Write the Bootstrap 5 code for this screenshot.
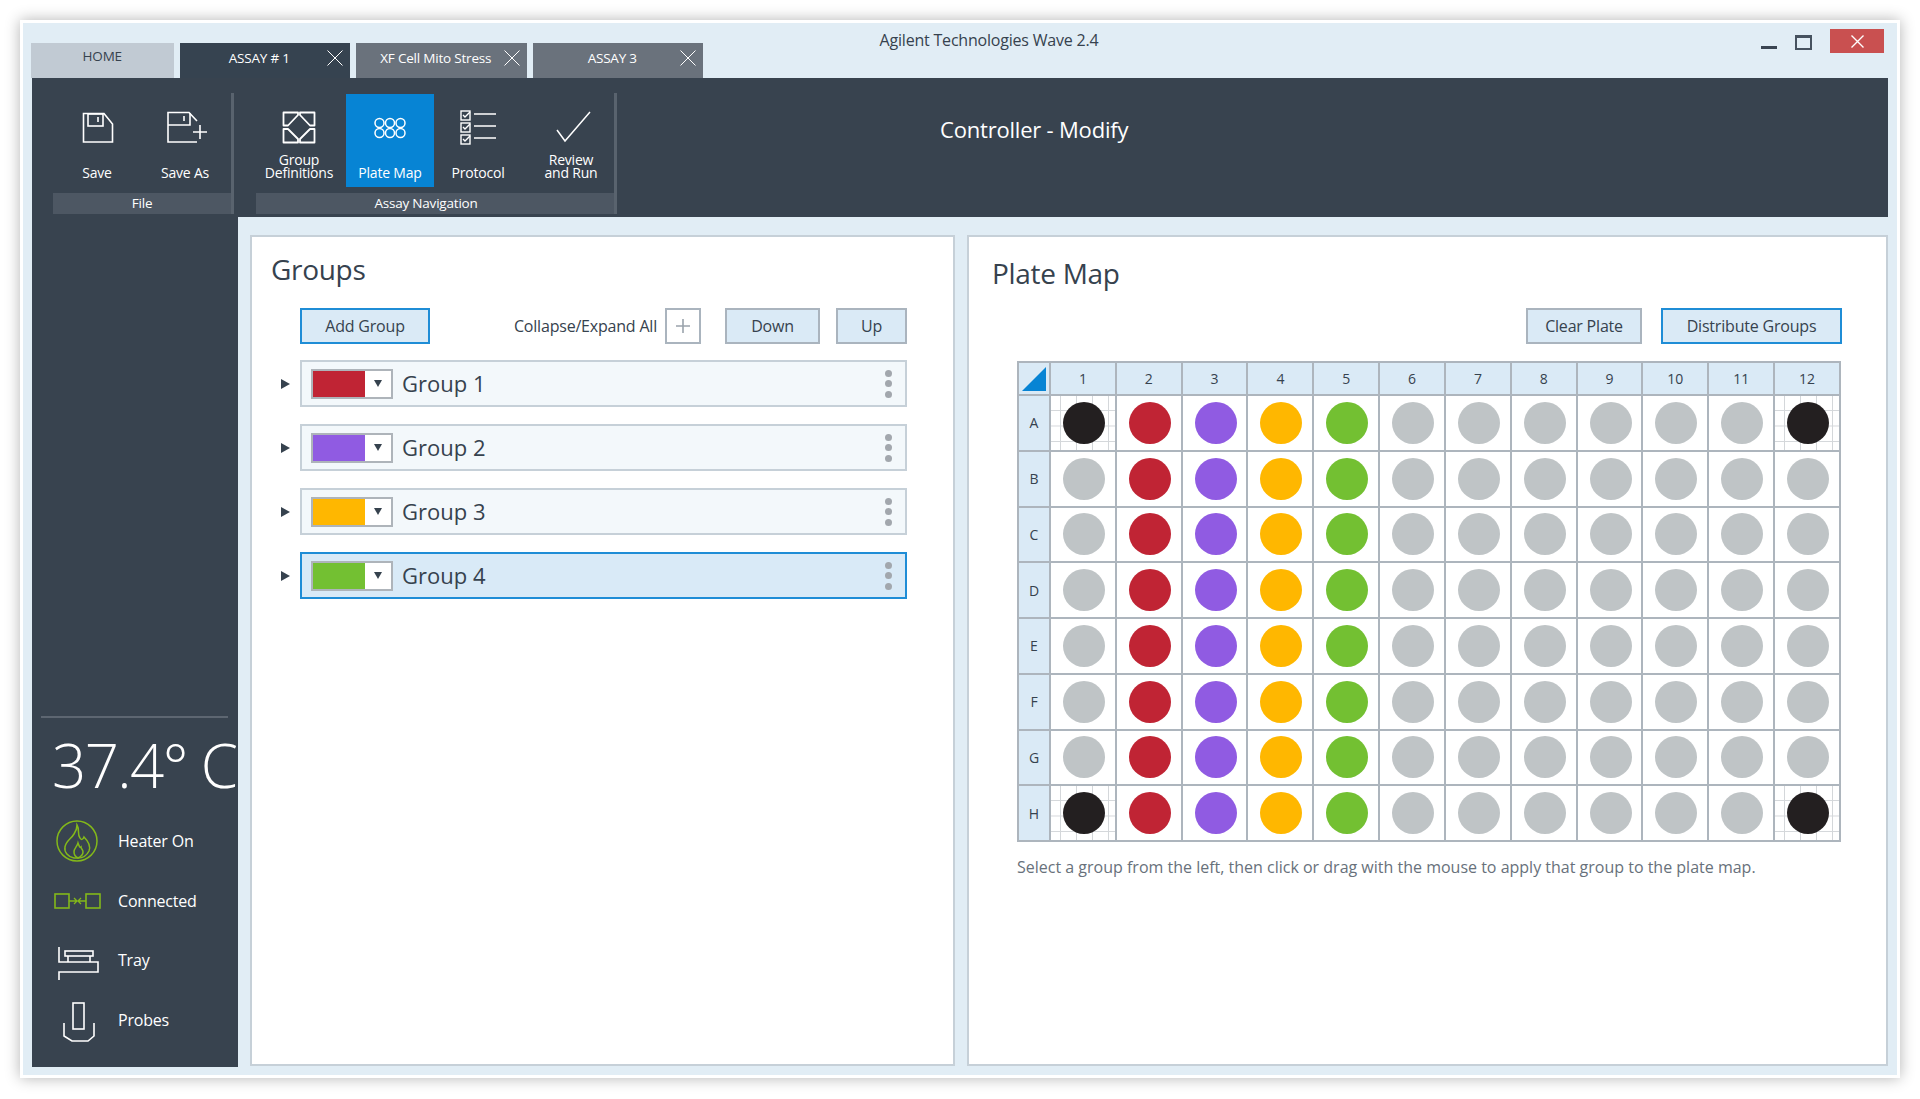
<!DOCTYPE html>
<html lang="en">
<head>
<meta charset="utf-8">
<title>Agilent Technologies Wave 2.4</title>
<link href="https://cdn.jsdelivr.net/npm/bootstrap@5.3.0/dist/css/bootstrap.min.css" rel="stylesheet">
<style>
html,body{height:100%;background:#fff;overflow:hidden}
body{font-family:"Open Sans","Liberation Sans",sans-serif;color:#36424e;font-size:16px;letter-spacing:-.2px}
.wv-win{position:relative;margin:20px 0 0 20px;width:1880px;height:1058px;border:3px solid #fff;background:#e1edf5;box-shadow:0 0 14px rgba(0,0,0,.3);padding:0 9px 8px}
.wv-top{height:55px;margin-left:-1px}
.wv-tabs{width:672px;height:35px;margin-top:20px;gap:6px}
.wv-tab{position:relative;width:171px;height:35px;font-size:13.5px;color:#fff;background:#6a727c;padding-right:11px;padding-top:5px}
.wv-tab.wv-home{width:143px;background:#c1cad3;color:#36424e;padding:0;padding-top:3px}
.wv-tab.wv-cur{background:#364350}
.wv-x{position:absolute;top:7px;right:7px}
.wv-name{width:572px;padding-top:5px;text-align:center;font-size:16px;color:#36424e}
.wv-ctl{padding-top:6px;padding-right:4px}
.wv-min{width:16px;height:3px;background:#3a4552;margin:17px 18px 0 0}
.wv-max{width:17px;height:15px;border:2px solid #46525f;border-top-width:3px;margin:6px 18px 0 0}
.wv-close{width:54px;height:24px;background:#c95050}
.wv-ribbon{height:139px;background:#38434f;padding:15px 0 3px 21px;flex:none}
.wv-grp{border-right:3px solid #59636e;flex:none}
.wv-g1{width:181px}
.wv-g2{width:361px;margin-left:22px}
.wv-items{height:93px;margin-top:1px}
.wv-item{width:88px;height:93px;flex:none;color:#fff;font-size:14px;line-height:13px;padding:15px 0 8px;text-align:center}
.wv-item.wv-on{background:#0784d4}
.wv-i1{width:86px;margin-right:4px}
.wv-i4{width:98px;margin-right:-6px}
.wv-bar{height:21px;margin-top:6px;background:#4d5763;color:#fff;font-size:13.5px;line-height:21px;text-align:center;margin-right:0}
.wv-g2 .wv-bar{padding-right:18px}
.wv-rtitle{margin-left:323px;padding-top:20px;font-size:22px;color:#fff}
.wv-main{height:850px}
.wv-side{width:206px;flex:none;background:#38434f;padding:0 10px 17px 9px;color:#fff}
.wv-rule{height:2px;background:#5d6671;margin-bottom:8px}
.wv-temp{height:85px;font-size:60px;font-weight:300;line-height:78px;padding-left:11px;white-space:nowrap;letter-spacing:-1.6px}
.wv-srow{height:59.7px;font-size:16px}
.wv-srow svg{width:56px;height:50px;margin:0 12px 0 9px;flex:none}
.wv-work{padding:18px 0 1px 12px;gap:12px;min-width:0}
.wv-panel{border:2px solid #c6d0d8;border-radius:0;background:#fff;height:831px;flex:none;color:#36424e}
.wv-pg{width:705px;padding:0 0 0 48px}
.wv-pp{width:921px;padding:0 0 0 48px}
.wv-h{font-size:28px;font-weight:400;line-height:38px;margin:0 0 0 -29px;padding-top:13px;height:71px;letter-spacing:-.3px}
.wv-pp .wv-h{margin-left:-25px;padding-top:17px}
.wv-bars{width:607px;height:35px}
.wv-bt{border-radius:0;height:36px;padding:0;font-size:16px;line-height:32px;color:#36424e;background:#daeaf6;border:2px solid #aab4be;letter-spacing:-.2px}
.wv-bt:hover{background:#daeaf6;color:#36424e;border-color:#aab4be}
.wv-bt.wv-act,.wv-bt.wv-act:hover{border-color:#1f8dd6}
.wv-plus{width:36px;background:#fff}
.wv-list{margin-top:17px;gap:17px;margin-left:-19px}
.wv-rowi{gap:10px}
.wv-tri{width:0;height:0;border-left:9px solid #36424e;border-top:5.5px solid transparent;border-bottom:5.5px solid transparent;flex:none}
.wv-gp{width:607px;height:47px;border:2px solid #c6d0d8;background:#f3f8fb;padding:0 9px;font-size:22px;letter-spacing:0;color:#36424e}
.wv-gp.wv-sel{background:#d9eaf7;border-color:#1f8dd6}
.wv-sw{width:82px;height:30px;border:2px solid #aeb4ba;background:#fff;flex:none;margin-right:9px}
.wv-col{width:52px;height:100%;flex:none}
.wv-dn{width:0;height:0;border-top:7px solid #36424e;border-left:4px solid transparent;border-right:4px solid transparent;margin:auto}
.wv-dots{gap:3.5px}
.wv-dots i{display:block;width:7px;height:7px;border-radius:50%;background:#a2a7ad}
.wv-c1{background:#c02434}.wv-c2{background:#905be2}.wv-c3{background:#ffb700}.wv-c4{background:#73c032}.wv-c0{background:#bfc4c6}.wv-c5{background:#231f20}
.wv-pbars{width:825px;height:36px;margin-left:0;gap:19px;padding-top:0}
.wv-pbars{margin-top:0}
table.wv-plate{width:824px;table-layout:fixed;margin:17px 0 0;--bs-table-border-color:#adb5bd;border-color:#adb5bd;border-width:2px}
table.wv-plate>*>tr>*{padding:0;border-width:2px;border-color:#adb5bd;text-align:center;vertical-align:middle;font-size:14px;font-weight:400;color:#36424e;letter-spacing:0}
table.wv-plate th{background:#daeaf6}
.wv-plate .wv-hr{height:33px}
.wv-plate .wv-wr{height:55.75px}
.wv-plate .wv-first{width:32px}
.wv-corner{display:block;margin:auto}
.wv-w{display:block;width:42px;height:42px;border-radius:50%;margin:0 auto;position:relative;left:1px}
table.wv-plate td.wv-mk{background-image:linear-gradient(#d4d7da 1px,transparent 1px),linear-gradient(90deg,#d4d7da 1px,transparent 1px);background-size:16px 15.5px;background-position:0 14px,9px 0}
.wv-note{margin-top:13px;font-size:16px;color:#68717b;letter-spacing:0}
</style>
</head>
<body>
<div class="wv-win d-flex flex-column">
  <div class="wv-top d-flex flex-none">
    <div class="wv-tabs d-flex">
      <div class="wv-tab wv-home text-center">HOME</div>
      <div class="wv-tab wv-cur text-center">ASSAY # 1<svg class="wv-x" width="16" height="16" viewBox="0 0 16 16"><path d="M.5.5l15 15M15.5.5l-15 15" stroke="#fff" fill="none"/></svg></div>
      <div class="wv-tab text-center">XF Cell Mito Stress<svg class="wv-x" width="16" height="16" viewBox="0 0 16 16"><path d="M.5.5l15 15M15.5.5l-15 15" stroke="#fff" fill="none"/></svg></div>
      <div class="wv-tab text-center">ASSAY 3<svg class="wv-x" width="16" height="16" viewBox="0 0 16 16"><path d="M.5.5l15 15M15.5.5l-15 15" stroke="#fff" fill="none"/></svg></div>
    </div>
    <div class="wv-name">Agilent Technologies Wave 2.4</div>
    <div class="wv-ctl ms-auto d-flex align-items-start">
      <div class="wv-min"></div>
      <div class="wv-max"></div>
      <div class="wv-close d-flex align-items-center justify-content-center"><svg width="13" height="13" viewBox="0 0 13 13"><path d="M.5.5l12 12M12.5.5l-12 12" stroke="#fff" stroke-width="1.4" fill="none"/></svg></div>
    </div>
  </div>

  <div class="wv-ribbon d-flex">
    <div class="wv-grp wv-g1">
      <div class="wv-items d-flex">
        <div class="wv-item d-flex flex-column align-items-center justify-content-between">
          <svg width="40" height="36" viewBox="0 0 40 36" fill="none" stroke="#fff" stroke-width="1.6"><path d="M6.5 4.5H27L35.5 15V33H6.5Z"/><rect x="11" y="5" width="15" height="12"/><path d="M21 8v5"/></svg>
          <span>Save</span>
        </div>
        <div class="wv-item d-flex flex-column align-items-center justify-content-between">
          <svg width="48" height="36" viewBox="0 0 48 36" fill="none" stroke="#fff" stroke-width="1.6"><path d="M36 12L28 3.5H7V33H36"/><path d="M7 16H29V4M23 7v5"/><path d="M39 16V30M32 23H46"/></svg>
          <span>Save As</span>
        </div>
      </div>
      <div class="wv-bar">File</div>
    </div>
    <div class="wv-grp wv-g2">
      <div class="wv-items d-flex">
        <div class="wv-item wv-i1 d-flex flex-column align-items-center justify-content-between">
          <svg width="40" height="36" viewBox="0 0 40 36" fill="none" stroke="#fff" stroke-width="1.8" stroke-linejoin="round"><path d="M4.5 3.5H19V6L9 16.5H4.5Z"/><path d="M35.5 3.5H21V6L31 16.5H35.5Z"/><path d="M4.5 33.5H19V30L9 20H4.5Z"/><path d="M35.5 33.5H21V30L31 20H35.5Z"/></svg>
          <span>Group<br>Definitions</span>
        </div>
        <div class="wv-item wv-on d-flex flex-column align-items-center justify-content-between">
          <svg width="40" height="36" viewBox="0 0 40 36" fill="none" stroke="#fff" stroke-width="1.5"><circle cx="9.500" cy="14" r="4.500"/><circle cx="20" cy="14" r="4.500"/><circle cx="30.500" cy="14" r="4.500"/><circle cx="9.500" cy="24" r="4.500"/><circle cx="20" cy="24" r="4.500"/><circle cx="30.500" cy="24" r="4.500"/></svg>
          <span>Plate Map</span>
        </div>
        <div class="wv-item d-flex flex-column align-items-center justify-content-between">
          <svg width="40" height="36" viewBox="0 0 40 36" fill="none" stroke="#fff" stroke-width="1.4"><rect x="3" y="2" width="9" height="9"/><rect x="3" y="14" width="9" height="9"/><rect x="3" y="26" width="9" height="9"/><path d="M5 6l2 2 5-5M5 18l2 2 5-5M5 30l2 2 5-5M16 5H38M16 17H38M16 29H38"/></svg>
          <span>Protocol</span>
        </div>
        <div class="wv-item wv-i4 d-flex flex-column align-items-center justify-content-between">
          <svg width="40" height="36" viewBox="0 0 40 36" fill="none" stroke="#fff" stroke-width="1.5"><path d="M6 21L14 32L39 3"/></svg>
          <span>Review<br>and Run</span>
        </div>
      </div>
      <div class="wv-bar">Assay Navigation</div>
    </div>
    <div class="wv-rtitle">Controller - Modify</div>
  </div>

  <div class="wv-main d-flex">
    <aside class="wv-side d-flex flex-column justify-content-end">
      <div class="wv-rule"></div>
      <div class="wv-temp">37.4° C</div>
      <div class="wv-srow d-flex align-items-center">
        <svg viewBox="0 0 56 50" fill="none" stroke="#83b81a" stroke-width="1.5"><circle cx="27" cy="25" r="20"/><path d="M27 9C30 14 27 18 30 22C31 24 33 24 34 21C38 25 41 30 39 35C37 39 33 42 28 42H24C18 41 14 36 15 31C16 25 21 23 24 18C26 15 27 12 27 9Z"/><path d="M28 27C27 31 24 32 24 36C24 39 26 41 28 42C30 41 33 39 33 36C33 33 31 33 31 31C30 32 29 30 28 27Z"/></svg>
        <span>Heater On</span>
      </div>
      <div class="wv-srow d-flex align-items-center">
        <svg viewBox="0 0 56 50" fill="none" stroke="#83b81a" stroke-width="1.6"><rect x="5" y="18" width="14" height="14"/><rect x="36" y="18" width="14" height="14"/><path d="M19 25H27M24 22l3 3-3 3M36 25H28M31 22l-3 3 3 3" stroke-width="1.3"/></svg>
        <span>Connected</span>
      </div>
      <div class="wv-srow d-flex align-items-center">
        <svg viewBox="0 0 56 50" fill="none" stroke="#fff" stroke-width="1.6"><path d="M9 12V27H48V37H9V45"/><rect x="15" y="16" width="28" height="5"/><path d="M18 21V27M40 21V27"/></svg>
        <span>Tray</span>
      </div>
      <div class="wv-srow d-flex align-items-center">
        <svg viewBox="0 0 56 50" fill="none" stroke="#fff" stroke-width="1.6"><rect x="23" y="8" width="11" height="26"/><path d="M14 28V41L22 46H38L44 41V28"/></svg>
        <span>Probes</span>
      </div>
    </aside>

    <div class="wv-work d-flex">
      <section class="wv-panel wv-pg">
        <h2 class="wv-h">Groups</h2>
        <div class="wv-bars d-flex align-items-center">
          <button class="btn wv-bt wv-act" style="width:130px">Add Group</button>
          <span class="ms-auto me-2">Collapse/Expand All</span>
          <button class="btn wv-bt wv-plus d-flex align-items-center justify-content-center" aria-label="Expand"><svg width="14" height="14" viewBox="0 0 14 14"><path d="M7 0V14M0 7H14" stroke="#9aa3ac" stroke-width="1.6"/></svg></button>
          <button class="btn wv-bt ms-4" style="width:95px">Down</button>
          <button class="btn wv-bt ms-3" style="width:71px">Up</button>
        </div>
        <div class="wv-list d-flex flex-column">
          <div class="wv-rowi d-flex align-items-center"><i class="wv-tri"></i><div class="wv-gp d-flex align-items-center"><div class="wv-sw d-flex"><div class="wv-col wv-c1"></div><div class="wv-dn"></div></div>Group 1<div class="wv-dots d-flex flex-column ms-auto me-1"><i></i><i></i><i></i></div></div></div>
          <div class="wv-rowi d-flex align-items-center"><i class="wv-tri"></i><div class="wv-gp d-flex align-items-center"><div class="wv-sw d-flex"><div class="wv-col wv-c2"></div><div class="wv-dn"></div></div>Group 2<div class="wv-dots d-flex flex-column ms-auto me-1"><i></i><i></i><i></i></div></div></div>
          <div class="wv-rowi d-flex align-items-center"><i class="wv-tri"></i><div class="wv-gp d-flex align-items-center"><div class="wv-sw d-flex"><div class="wv-col wv-c3"></div><div class="wv-dn"></div></div>Group 3<div class="wv-dots d-flex flex-column ms-auto me-1"><i></i><i></i><i></i></div></div></div>
          <div class="wv-rowi d-flex align-items-center"><i class="wv-tri"></i><div class="wv-gp wv-sel d-flex align-items-center"><div class="wv-sw d-flex"><div class="wv-col wv-c4"></div><div class="wv-dn"></div></div>Group 4<div class="wv-dots d-flex flex-column ms-auto me-1"><i></i><i></i><i></i></div></div></div>
        </div>
      </section>

      <section class="wv-panel wv-pp">
        <h2 class="wv-h">Plate Map</h2>
        <div class="wv-pbars d-flex justify-content-end">
          <button class="btn wv-bt" style="width:116px">Clear Plate</button>
          <button class="btn wv-bt wv-act" style="width:181px">Distribute Groups</button>
        </div>
        <table class="table table-bordered wv-plate">
          <thead><tr class="wv-hr"><th class="wv-first"><svg class="wv-corner" width="24" height="24" viewBox="0 0 24 24"><path d="M24 0V24H0Z" fill="#0784d4"/></svg></th><th>1</th><th>2</th><th>3</th><th>4</th><th>5</th><th>6</th><th>7</th><th>8</th><th>9</th><th>10</th><th>11</th><th>12</th></tr></thead>
          <tbody id="wv-body">
            <tr class="wv-wr"><th>A</th><td class="wv-mk"><i class="wv-w wv-c5"></i></td><td><i class="wv-w wv-c1"></i></td><td><i class="wv-w wv-c2"></i></td><td><i class="wv-w wv-c3"></i></td><td><i class="wv-w wv-c4"></i></td><td><i class="wv-w wv-c0"></i></td><td><i class="wv-w wv-c0"></i></td><td><i class="wv-w wv-c0"></i></td><td><i class="wv-w wv-c0"></i></td><td><i class="wv-w wv-c0"></i></td><td><i class="wv-w wv-c0"></i></td><td class="wv-mk"><i class="wv-w wv-c5"></i></td></tr>
            <tr class="wv-wr"><th>B</th><td><i class="wv-w wv-c0"></i></td><td><i class="wv-w wv-c1"></i></td><td><i class="wv-w wv-c2"></i></td><td><i class="wv-w wv-c3"></i></td><td><i class="wv-w wv-c4"></i></td><td><i class="wv-w wv-c0"></i></td><td><i class="wv-w wv-c0"></i></td><td><i class="wv-w wv-c0"></i></td><td><i class="wv-w wv-c0"></i></td><td><i class="wv-w wv-c0"></i></td><td><i class="wv-w wv-c0"></i></td><td><i class="wv-w wv-c0"></i></td></tr>
            <tr class="wv-wr"><th>C</th><td><i class="wv-w wv-c0"></i></td><td><i class="wv-w wv-c1"></i></td><td><i class="wv-w wv-c2"></i></td><td><i class="wv-w wv-c3"></i></td><td><i class="wv-w wv-c4"></i></td><td><i class="wv-w wv-c0"></i></td><td><i class="wv-w wv-c0"></i></td><td><i class="wv-w wv-c0"></i></td><td><i class="wv-w wv-c0"></i></td><td><i class="wv-w wv-c0"></i></td><td><i class="wv-w wv-c0"></i></td><td><i class="wv-w wv-c0"></i></td></tr>
            <tr class="wv-wr"><th>D</th><td><i class="wv-w wv-c0"></i></td><td><i class="wv-w wv-c1"></i></td><td><i class="wv-w wv-c2"></i></td><td><i class="wv-w wv-c3"></i></td><td><i class="wv-w wv-c4"></i></td><td><i class="wv-w wv-c0"></i></td><td><i class="wv-w wv-c0"></i></td><td><i class="wv-w wv-c0"></i></td><td><i class="wv-w wv-c0"></i></td><td><i class="wv-w wv-c0"></i></td><td><i class="wv-w wv-c0"></i></td><td><i class="wv-w wv-c0"></i></td></tr>
            <tr class="wv-wr"><th>E</th><td><i class="wv-w wv-c0"></i></td><td><i class="wv-w wv-c1"></i></td><td><i class="wv-w wv-c2"></i></td><td><i class="wv-w wv-c3"></i></td><td><i class="wv-w wv-c4"></i></td><td><i class="wv-w wv-c0"></i></td><td><i class="wv-w wv-c0"></i></td><td><i class="wv-w wv-c0"></i></td><td><i class="wv-w wv-c0"></i></td><td><i class="wv-w wv-c0"></i></td><td><i class="wv-w wv-c0"></i></td><td><i class="wv-w wv-c0"></i></td></tr>
            <tr class="wv-wr"><th>F</th><td><i class="wv-w wv-c0"></i></td><td><i class="wv-w wv-c1"></i></td><td><i class="wv-w wv-c2"></i></td><td><i class="wv-w wv-c3"></i></td><td><i class="wv-w wv-c4"></i></td><td><i class="wv-w wv-c0"></i></td><td><i class="wv-w wv-c0"></i></td><td><i class="wv-w wv-c0"></i></td><td><i class="wv-w wv-c0"></i></td><td><i class="wv-w wv-c0"></i></td><td><i class="wv-w wv-c0"></i></td><td><i class="wv-w wv-c0"></i></td></tr>
            <tr class="wv-wr"><th>G</th><td><i class="wv-w wv-c0"></i></td><td><i class="wv-w wv-c1"></i></td><td><i class="wv-w wv-c2"></i></td><td><i class="wv-w wv-c3"></i></td><td><i class="wv-w wv-c4"></i></td><td><i class="wv-w wv-c0"></i></td><td><i class="wv-w wv-c0"></i></td><td><i class="wv-w wv-c0"></i></td><td><i class="wv-w wv-c0"></i></td><td><i class="wv-w wv-c0"></i></td><td><i class="wv-w wv-c0"></i></td><td><i class="wv-w wv-c0"></i></td></tr>
            <tr class="wv-wr"><th>H</th><td class="wv-mk"><i class="wv-w wv-c5"></i></td><td><i class="wv-w wv-c1"></i></td><td><i class="wv-w wv-c2"></i></td><td><i class="wv-w wv-c3"></i></td><td><i class="wv-w wv-c4"></i></td><td><i class="wv-w wv-c0"></i></td><td><i class="wv-w wv-c0"></i></td><td><i class="wv-w wv-c0"></i></td><td><i class="wv-w wv-c0"></i></td><td><i class="wv-w wv-c0"></i></td><td><i class="wv-w wv-c0"></i></td><td class="wv-mk"><i class="wv-w wv-c5"></i></td></tr>
          </tbody>
        </table>
        <p class="wv-note">Select a group from the left, then click or drag with the mouse to apply that group to the plate map.</p>
      </section>
    </div>
  </div>
</div>
<script src="https://cdn.jsdelivr.net/npm/bootstrap@5.3.0/dist/js/bootstrap.bundle.min.js"></script>
</body>
</html>
